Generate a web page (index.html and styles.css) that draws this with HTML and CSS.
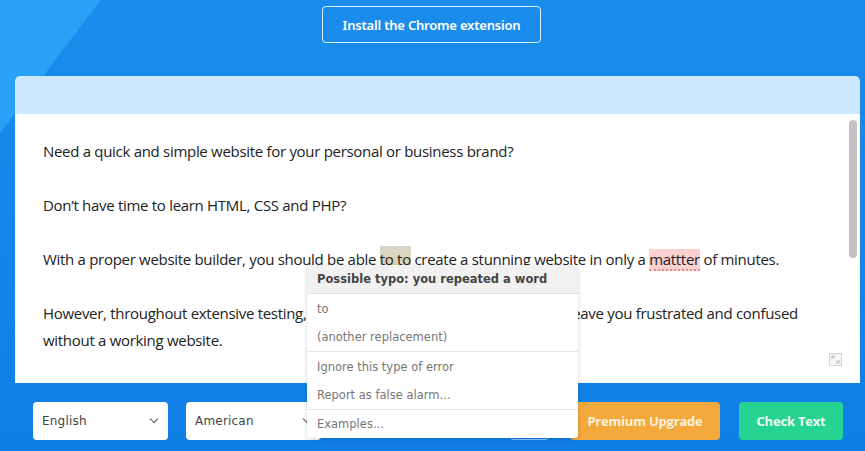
FILE: index.html
```html
<!DOCTYPE html>
<html lang="en">
<head>
  <meta charset="UTF-8" />
  <title>Grammar checker</title>
  <link rel="stylesheet" href="styles.css">
</head>
<body>
  <div class="page">
    <!-- top -->
    <div class="top">
      <a class="install-btn" href="#">Install the Chrome extension</a>
    </div>

    <!-- editor card -->
    <div class="editor">
      <div class="editor-head"></div>
      <div class="editor-body">
        <p>Need a quick and simple website for your personal or business brand?</p>
        <p>Don’t have time to learn HTML, CSS and PHP?</p>
        <p>With a proper website builder, you should be able <span class="hl-dup">to to</span> create a stunning website in only a <span class="hl-typo">mattter</span> of minutes.</p>
        <p>However, throughout extensive testing, we noticed that most website builders leave you frustrated and confused<br>without a working website.</p>
        <div class="scrollbar"></div>
        <div class="resize">
          <svg width="11" height="11" viewBox="0 0 11 11">
            <path d="M2 2h3M2 2v3M2 2l2.5 2.5M9 9h-3M9 9v-3M9 9l-2.5-2.5" stroke="#b5b5b5" stroke-width="1" fill="none"/>
          </svg>
        </div>
      </div>
    </div>

    <!-- bottom controls -->
    <div class="controls">
      <div class="select lang">English <span class="chev"></span></div>
      <div class="select variant">American <span class="chev"></span></div>
      <div class="outline-btn"></div>
      <button class="btn premium">Premium Upgrade</button>
      <button class="btn check">Check Text</button>
    </div>

    <!-- suggestion popup -->
    <div class="popup">
      <div class="popup-title">Possible typo: you repeated a word</div>
      <div class="popup-group">
        <div class="popup-item">to</div>
        <div class="popup-item">(another replacement)</div>
      </div>
      <div class="popup-group">
        <div class="popup-item">Ignore this type of error</div>
        <div class="popup-item">Report as false alarm...</div>
      </div>
      <div class="popup-group">
        <div class="popup-item">Examples...</div>
      </div>
    </div>
  </div>
</body>
</html>
```

FILE: styles.css
```css
/* base */
html, body {
  margin: 0;
  padding: 0;
  height: 100%;
  overflow: hidden;
}
body {
  font-family: "Open Sans", "Noto Sans", sans-serif;
  background:
    linear-gradient(127deg, #27a2f7 0, #27a2f7 80px, rgba(0,0,0,0) 80.5px),
    linear-gradient(180deg, #1a8dec 0%, #1587ea 40%, #0f7fe6 100%);
}
.page {
  position: relative;
  height: 451px;
}

/* top */
.top {
  height: 76px;
  display: flex;
  justify-content: center;
  align-items: flex-start;
  padding-top: 6px;
  box-sizing: border-box;
}
.install-btn {
  display: flex;
  align-items: center;
  justify-content: center;
  width: 219px;
  height: 37px;
  box-sizing: border-box;
  margin-left: -2px;
  border: 1px solid rgba(255,255,255,0.85);
  border-radius: 4px;
  color: #fff;
  font-family: "Noto Sans", sans-serif;
  font-weight: 600;
  font-size: 13px;
  text-decoration: none;
  letter-spacing: -0.2px;
}

/* editor */
.editor {
  margin: 0 5px 0 15px;
  border-radius: 5px 5px 0 0;
  overflow: hidden;
}
.editor-head {
  height: 38px;
  background: #cde8fd;
}
.editor-body {
  position: relative;
  height: 269px;
  background: #fff;
  padding: 24px 28px 0;
  box-sizing: border-box;
  color: #222;
  font-size: 15px;
  line-height: 27px;
  letter-spacing: -0.3px;
}
.editor-body p {
  margin: 0 0 27px;
}
.hl-dup {
  padding: 3px 0;
  background: linear-gradient(180deg, #d6d5cc 0%, #e2d6a4 100%);
}
.hl-typo {
  background: #fbd0d0;
  border-bottom: 2px dotted #e88a8a;
}
.scrollbar {
  position: absolute;
  right: 3px;
  top: 6px;
  width: 8px;
  height: 138px;
  border-radius: 4px;
  background: #c3c1c2;
}
.resize {
  position: absolute;
  right: 18px;
  bottom: 17px;
  width: 11px;
  height: 11px;
  border: 1px solid #d4d4d4;
  background: #f6f6f6;
}
.resize svg {
  display: block;
}

/* bottom controls */
.controls {
  display: flex;
  align-items: center;
  padding: 19px 0 0 33px;
}
.select {
  position: relative;
  width: 135px;
  height: 38px;
  box-sizing: border-box;
  padding: 0 9px;
  display: flex;
  align-items: center;
  background: #fff;
  border-radius: 4px;
  font-family: "DejaVu Sans", sans-serif;
  font-size: 12px;
  color: #444;
  letter-spacing: 0.2px;
}
.select.variant {
  margin-left: 18px;
}
.chev {
  position: absolute;
  right: 11px;
  top: 14px;
  width: 5px;
  height: 5px;
  border-right: 1.5px solid #555;
  border-bottom: 1.5px solid #555;
  transform: rotate(45deg);
}
.outline-btn {
  width: 41px;
  height: 38px;
  box-sizing: border-box;
  margin-left: 188px;
  border: 1.5px solid #8cc8f7;
  border-radius: 5px;
}
.btn {
  height: 38px;
  border: 0;
  border-radius: 4px;
  color: #fff;
  font-family: "Open Sans", sans-serif;
  font-weight: 700;
  font-size: 13px;
  letter-spacing: -0.2px;
}
.premium {
  width: 150px;
  margin-left: 20px;
  background: #f4a93d;
  color: #fdf1dd;
}
.check {
  width: 104px;
  margin-left: 19px;
  background: #26d390;
  color: #eefcf6;
}

/* popup */
.popup {
  position: absolute;
  left: 307px;
  top: 265px;
  width: 271px;
  background: #fff;
  border-radius: 3px;
  box-shadow: 0 1px 4px rgba(0,0,0,0.18);
  font-family: "DejaVu Sans", sans-serif;
  font-size: 11.5px;
  color: #777;
  overflow: hidden;
}
.popup-title {
  height: 28px;
  line-height: 28px;
  padding-left: 10px;
  background: #f1f1f1;
  border-bottom: 1px solid #e3e3e3;
  color: #444;
  font-weight: bold;
  font-size: 11.5px;
}
.popup-group {
  padding-top: 1px;
  border-bottom: 1px solid #e6e6e6;
}
.popup-group:last-child {
  border-bottom: 0;
}
.popup-item {
  height: 28px;
  line-height: 28px;
  padding-left: 10px;
}
.popup-group:last-child .popup-item {
  height: 27px;
  line-height: 27px;
}
```
